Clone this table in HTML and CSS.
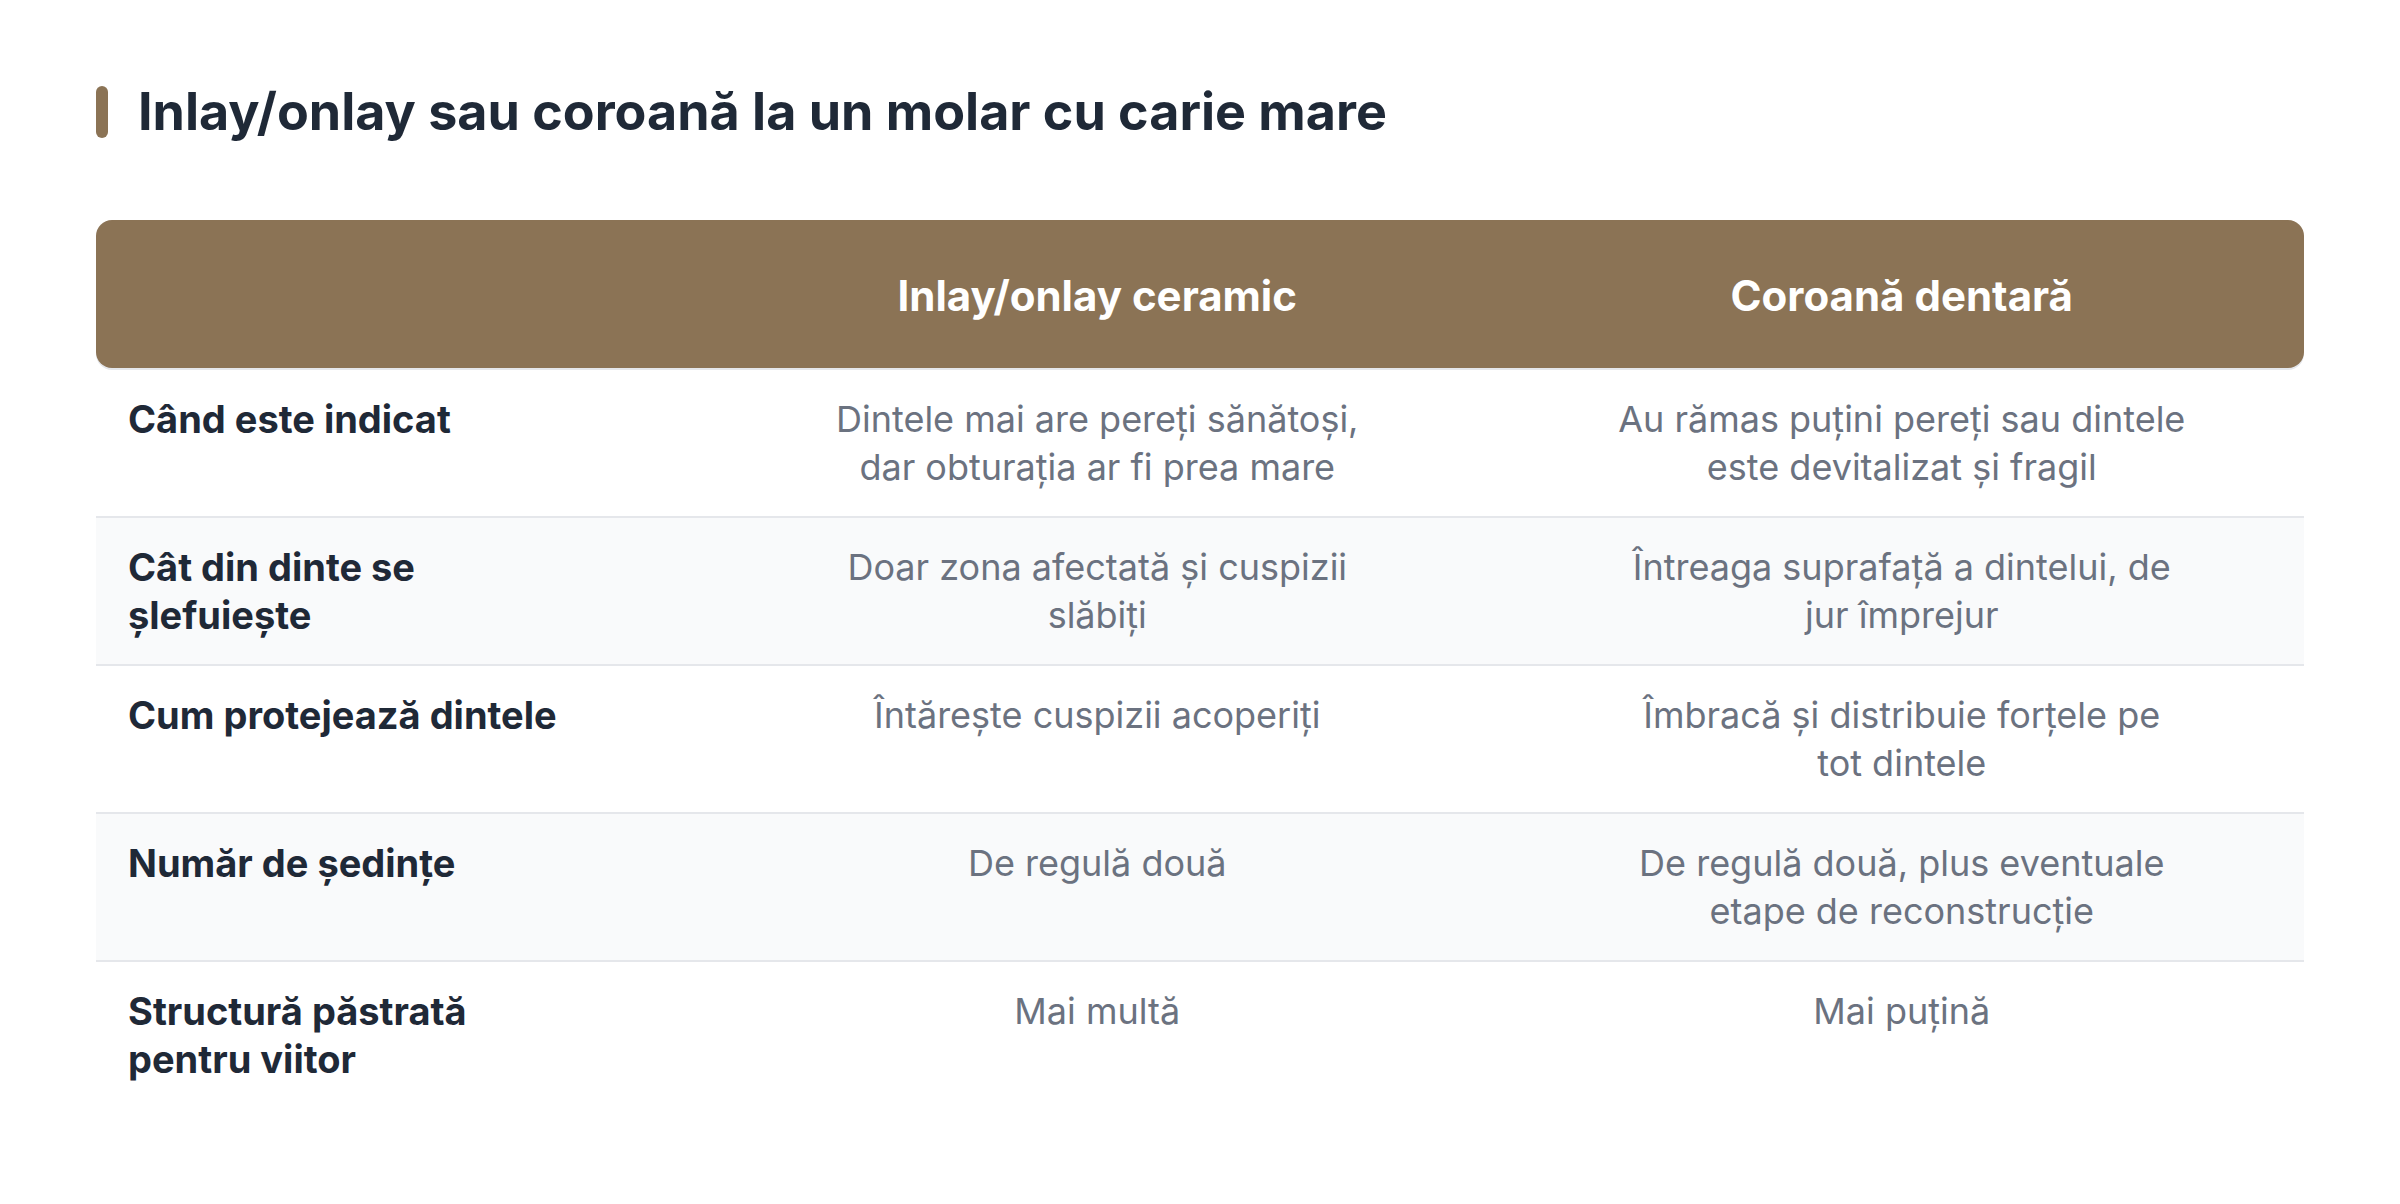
FILE: index.html
```html
<!DOCTYPE html>
<html lang="ro">
<head>
<meta charset="utf-8">
<title>Inlay/onlay sau coroană la un molar cu carie mare</title>
<link rel="stylesheet" href="styles.css">
</head>
<body>
<main class="page">
  <h1 class="title">Inlay/onlay sau coroană la un molar cu carie mare</h1>
  <div class="table">
    <div class="head">
      <div class="hcell"></div>
      <div class="hcell">Inlay/onlay ceramic</div>
      <div class="hcell">Coroană dentară</div>
    </div>
    <div class="row">
      <div class="cell label"><span>Când este indicat</span></div>
      <div class="cell value"><span>Dintele mai are pereți sănătoși, dar obturația ar fi prea mare</span></div>
      <div class="cell value"><span>Au rămas puțini pereți sau dintele este devitalizat și fragil</span></div>
    </div>
    <div class="row alt">
      <div class="cell label"><span>Cât din dinte se șlefuiește</span></div>
      <div class="cell value"><span>Doar zona afectată și cuspizii slăbiți</span></div>
      <div class="cell value"><span>Întreaga suprafață a dintelui, de jur împrejur</span></div>
    </div>
    <div class="row">
      <div class="cell label"><span>Cum protejează dintele</span></div>
      <div class="cell value"><span>Întărește cuspizii acoperiți</span></div>
      <div class="cell value"><span>Îmbracă și distribuie forțele pe tot dintele</span></div>
    </div>
    <div class="row alt">
      <div class="cell label"><span>Număr de ședințe</span></div>
      <div class="cell value"><span>De regulă două</span></div>
      <div class="cell value"><span>De regulă două, plus eventuale etape de reconstrucție</span></div>
    </div>
    <div class="row last">
      <div class="cell label"><span>Structură păstrată pentru viitor</span></div>
      <div class="cell value"><span>Mai multă</span></div>
      <div class="cell value"><span>Mai puțină</span></div>
    </div>
  </div>
</main>
</body>
</html>
```

FILE: styles.css
```css
* { box-sizing: border-box; }
html, body { margin: 0; padding: 0; background: #ffffff; }
body {
  font-family: Inter, "Noto Sans", "Liberation Sans", sans-serif;
  color: #1f2937;
}
.page {
  padding: 81px 96px 80px;
}
.title {
  display: flex;
  align-items: center;
  gap: 30px;
  margin: 0 0 77px 0;
  font-size: 52px;
  line-height: 1.2;
  font-weight: 700;
  color: #1f2937;
}
.title::before {
  content: "";
  flex: none;
  width: 12px;
  height: 52px;
  border-radius: 6px;
  background: #8b7355;
}
.table {
  display: flex;
  flex-direction: column;
}
.head, .row {
  display: grid;
  grid-template-columns: 599px 1fr 1fr;
}
.head {
  background: #8b7355;
  border-radius: 16px;
  color: #ffffff;
  font-size: 42px;
  font-weight: 700;
  line-height: 60px;
  box-shadow: 0 2px 0 #e5e7eb;
  margin-bottom: 2px;
}
.hcell {
  padding: 46px 32px 42px;
  text-align: center;
}
.row {
  border-bottom: 2px solid #e5e7eb;
  line-height: 48px;
}
.row.alt { background: #f9fafb; }
.row.last { border-bottom: none; }
.cell {
  padding: 25px 32px 25px;
}
.label span {
  display: block;
  max-width: 440px;
  font-size: 38px;
  font-weight: 700;
  color: #1f2937;
}
.value {
  text-align: center;
  color: #6b7280;
  font-size: 36px;
}
.value span {
  display: block;
  max-width: 570px;
  margin: 0 auto;
}
```
